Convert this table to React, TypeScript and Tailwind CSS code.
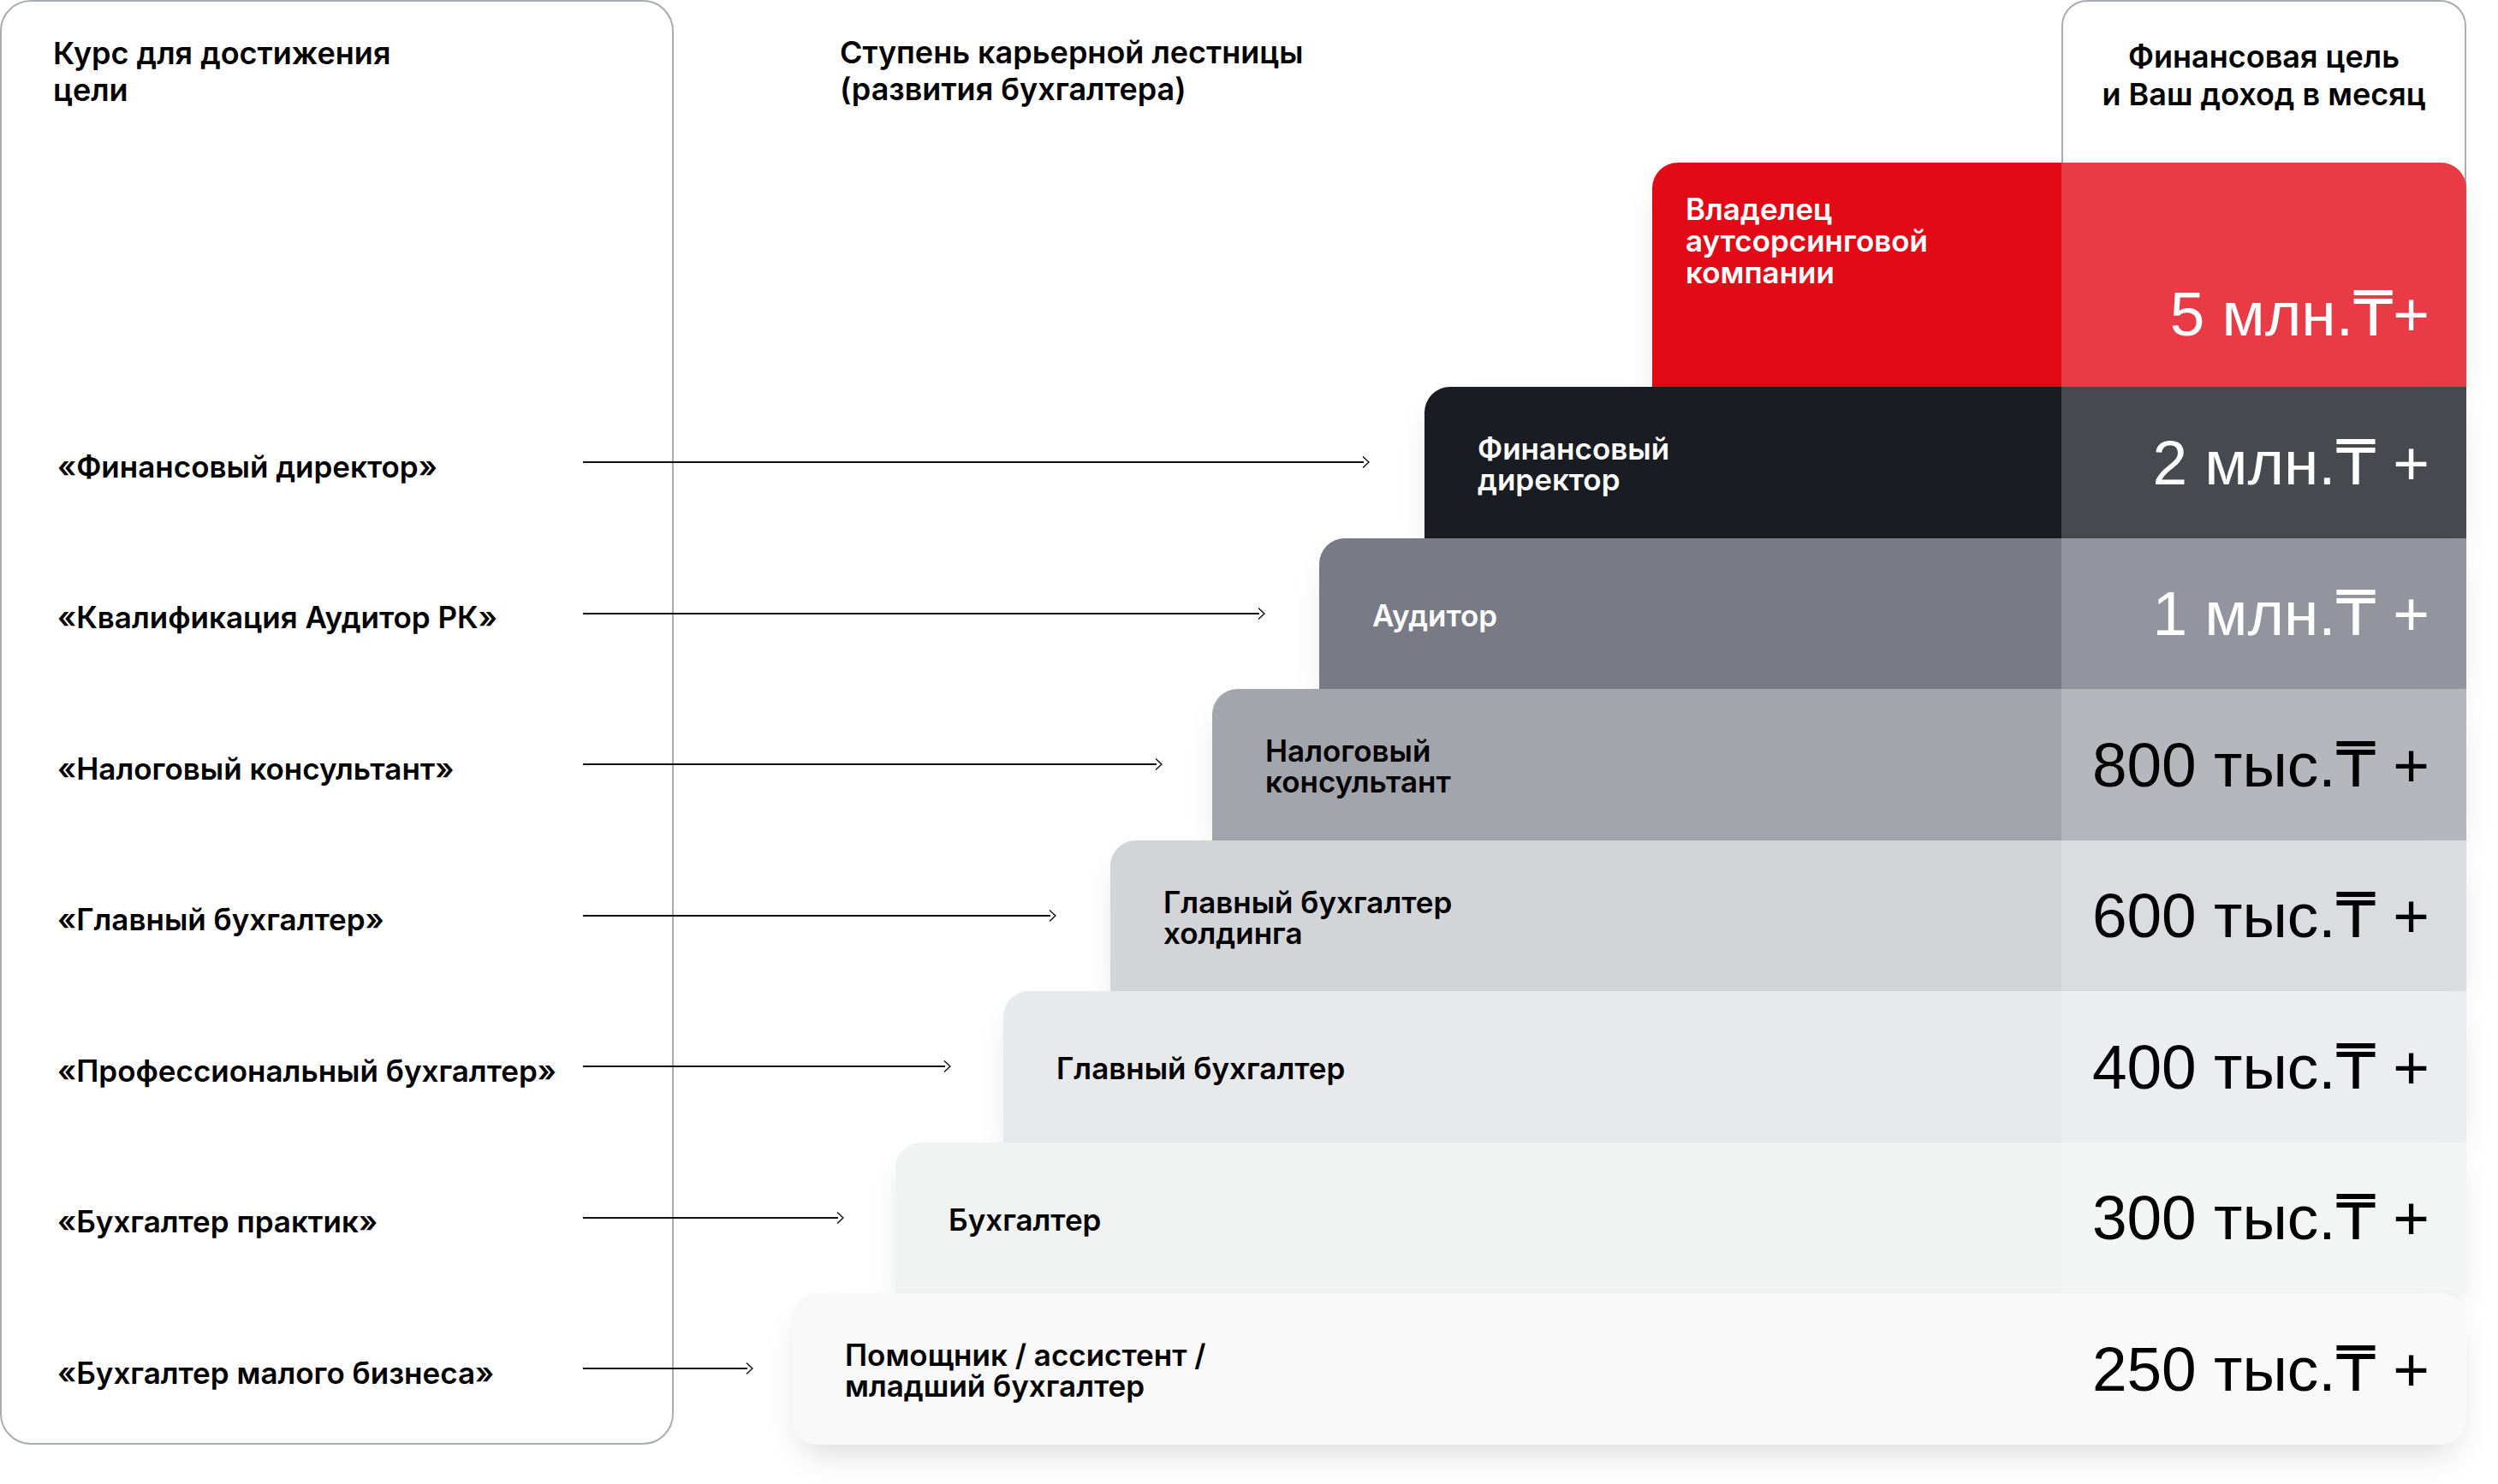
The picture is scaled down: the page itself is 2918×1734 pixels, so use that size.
import React from 'react';

type Course = { label: string; arrow: string };

const courses: Course[] = [
  { label: '«Финансовый директор»', arrow: 'w-[919px]' },
  { label: '«Квалификация Аудитор РК»', arrow: 'w-[797px]' },
  { label: '«Налоговый консультант»', arrow: 'w-[677px]' },
  { label: '«Главный бухгалтер»', arrow: 'w-[553px]' },
  { label: '«Профессиональный бухгалтер»', arrow: 'w-[430px]' },
  { label: '«Бухгалтер практик»', arrow: 'w-[305px]' },
  { label: '«Бухгалтер малого бизнеса»', arrow: 'w-[199px]' },
];

type Step = {
  lines: string[];
  value: string;
  box: string;
  text: string;
};

const steps: Step[] = [
  { lines: ['Финансовый', 'директор'], value: '2 млн.₸ +', box: 'w-[1217px] bg-[#1a1c23] rounded-tl-[30px]', text: 'text-white' },
  { lines: ['Аудитор'], value: '1 млн.₸ +', box: 'w-[1340px] bg-[#787a85] rounded-tl-[30px]', text: 'text-white' },
  { lines: ['Налоговый', 'консультант'], value: '800 тыс.₸ +', box: 'w-[1465px] bg-[#a3a5ad] rounded-tl-[30px]', text: 'text-black' },
  { lines: ['Главный бухгалтер', 'холдинга'], value: '600 тыс.₸ +', box: 'w-[1584px] bg-[#d3d4d8] rounded-tl-[30px]', text: 'text-black' },
  { lines: ['Главный бухгалтер'], value: '400 тыс.₸ +', box: 'w-[1709px] bg-[#e8e9eb] rounded-tl-[30px]', text: 'text-black' },
  { lines: ['Бухгалтер'], value: '300 тыс.₸ +', box: 'w-[1835px] bg-[#f1f2f2] rounded-tl-[30px]', text: 'text-black' },
  { lines: ['Помощник / ассистент /', 'младший бухгалтер'], value: '250 тыс.₸ +', box: 'w-[1956px] bg-[#f8f8f8] rounded-t-[30px] rounded-b-[30px]', text: 'text-black' },
];

function ArrowRow({ w }: { w: string }) {
  return (
    <div className={`${w} h-[16px] shrink-0 flex items-center`}>
      <div className="flex-1 h-[1.6px] bg-[#111]" />
      <svg width="9" height="16" viewBox="0 0 9 16" className="shrink-0 -ml-[2px]">
        <polyline points="1,1.5 8,8 1,14.5" fill="none" stroke="#111" strokeWidth="1.5" strokeLinejoin="miter" />
      </svg>
    </div>
  );
}

function LeftPanel() {
  return (
    <div className="w-[787px] h-[1688px] shrink-0 border-2 border-[#a9acb1] rounded-[36px] flex flex-col">
      <div className="h-[450px] shrink-0 pl-[60px] pt-[39px]">
        <h2 className="text-[36px] leading-[43px] font-semibold">
          Курс для достижения
          <br />
          цели
        </h2>
      </div>
      {courses.map((c) => (
        <div key={c.label} className="h-[176.5px] shrink-0 flex items-center">
          <div className="w-[679px] shrink-0 pl-[65px] pt-[10px] text-[35px] leading-[43px] font-semibold whitespace-nowrap">
            {c.label}
          </div>
          <ArrowRow w={c.arrow} />
        </div>
      ))}
    </div>
  );
}

const valueFont = "font-['Liberation_Sans','DejaVu_Sans',sans-serif]";

export default function App() {
  return (
    <div className="w-[2918px] h-[1734px] bg-white flex items-start font-['Inter','Noto_Sans',sans-serif] text-black">
      <LeftPanel />
      <div className="flex-1 flex flex-col items-end pr-[37px]">
        <div className="w-full h-[190px] shrink-0 flex items-start justify-between">
          <h2 className="ml-[194px] pt-[40px] text-[36px] leading-[43px] font-semibold">
            Ступень карьерной лестницы
            <br />
            (развития бухгалтера)
          </h2>
          <div className="w-[473px] h-[260px] shrink-0 border-2 border-b-0 border-[#a9acb1] rounded-t-[30px] pt-[42px] text-center text-[36px] leading-[44px] font-semibold">
            Финансовая цель
            <br />
            и Ваш доход в месяц
          </div>
        </div>

        <div className="w-[951px] h-[262px] shrink-0 flex bg-[#e30a17] rounded-t-[30px] overflow-hidden text-white shadow-[0_20px_40px_-12px_rgba(0,0,0,0.16)]">
          <div className="flex-1 pl-[39px] pt-[36px] text-[35px] leading-[37px] font-semibold">
            Владелец
            <br />
            аутсорсинговой
            <br />
            компании
          </div>
          <div className="w-[473px] shrink-0 bg-white/20 flex flex-col justify-end">
            <div className={`h-[176.5px] pt-[6px] flex items-center justify-end pr-[43px] text-[73px] leading-none ${valueFont}`}>
              5 млн.₸+
            </div>
          </div>
        </div>

        {steps.map((s) => (
          <div
            key={s.value}
            className={`${s.box} h-[176.5px] shrink-0 flex overflow-hidden shadow-[0_20px_40px_-12px_rgba(0,0,0,0.16)] ${s.text}`}
          >
            <div className="flex-1 flex items-center pl-[62px] pt-[4px]">
              <p className="text-[35px] leading-[36px] font-semibold whitespace-nowrap">
                {s.lines.map((l, i) => (
                  <React.Fragment key={i}>
                    {i > 0 && <br />}
                    {l}
                  </React.Fragment>
                ))}
              </p>
            </div>
            <div className={`w-[473px] shrink-0 bg-white/20 flex items-center justify-end pr-[43px] text-[73px] leading-none whitespace-nowrap ${valueFont}`}>
              {s.value}
            </div>
          </div>
        ))}
      </div>
    </div>
  );
}
